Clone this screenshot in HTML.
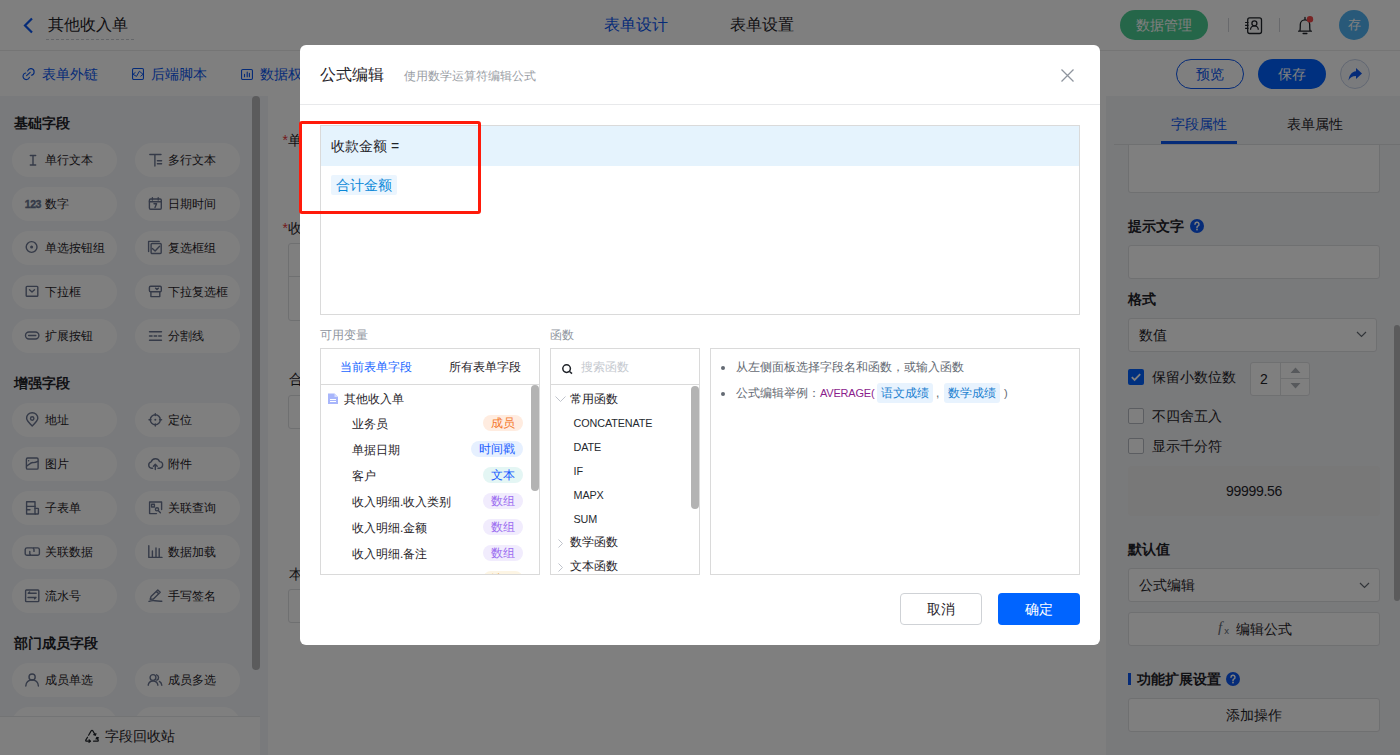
<!DOCTYPE html>
<html><head><meta charset="utf-8">
<style>
*{box-sizing:border-box;margin:0;padding:0}
html,body{width:1400px;height:755px;overflow:hidden;background:#fff;font-family:"Liberation Sans",sans-serif;color:#1f2329}
.a{position:absolute;white-space:nowrap}
svg{position:absolute;overflow:visible}
.sec{font-size:14px;font-weight:bold;color:#1f2329;left:14px;line-height:20px}
.pill{position:absolute;width:105px;height:34px;border-radius:17px;background:#fff}
.pt{position:absolute;font-size:12px;line-height:18px;color:#1f2329;white-space:nowrap}
.ic{position:absolute;width:14px;height:14px}
.ic svg{left:0;top:0}
.lbl{font-size:14px;line-height:20px;color:#1f2329}
.box{position:absolute;border:1px solid #dee0e3;border-radius:3px;background:#fff}
</style></head><body>

<!-- ================= HEADER ================= -->
<div class="a" style="left:0;top:0;width:1400px;height:51px;background:#fff;border-bottom:1px solid #ebebeb"></div>
<svg style="left:22px;top:17px" width="13" height="17" viewBox="0 0 13 17"><path d="M10 1.5 L3 8.5 L10 15.5" fill="none" stroke="#0a56f0" stroke-width="2.2"/></svg>
<div class="a" style="left:48px;top:14px;font-size:16px;line-height:22px;color:#1f2329">其他收入单</div>
<div class="a" style="left:46px;top:39px;width:88px;border-top:1px dashed #c9ccd2"></div>
<div class="a" style="left:604px;top:14px;font-size:16px;line-height:22px;color:#0a56f0">表单设计</div>
<div class="a" style="left:730px;top:14px;font-size:16px;line-height:22px;color:#1f2329">表单设置</div>
<div class="a" style="left:1120px;top:10px;width:88px;height:30px;border-radius:15px;background:#4bcc92;color:#fff;font-size:14px;line-height:30px;text-align:center">数据管理</div>
<div class="a" style="left:1228px;top:18px;width:1px;height:14px;background:#d0d3d8"></div>
<svg style="left:1238px;top:10px" width="82" height="32" viewBox="0 0 82 32"><rect x="9.7" y="7.9" width="13.8" height="15.6" rx="2" fill="none" stroke="#1f2329" stroke-width="1.3"/><path d="M7.1 12.5h3.4M7.1 15.4h3.4M7.1 18.3h3.4" stroke="#1f2329" stroke-width="1.2"/><circle cx="16.4" cy="13.3" r="2.5" fill="none" stroke="#1f2329" stroke-width="1.3"/><path d="M12.5 19.7A3.9 3.9 0 0 1 20.3 19.7" fill="none" stroke="#1f2329" stroke-width="1.3"/></svg>
<div class="a" style="left:1279px;top:18px;width:1px;height:14px;background:#d0d3d8"></div>
<svg style="left:1238px;top:10px" width="82" height="32" viewBox="0 0 82 32"><path d="M60.6 21.2H73.4M61.8 21.2C62.3 20 62.3 19 62.3 14.6A4.7 4.7 0 0 1 71.7 14.6C71.7 19 71.7 20 72.2 21.2M67 7.4V9.4M65.1 23.5H68.9" fill="none" stroke="#1f2329" stroke-width="1.3" stroke-linecap="round"/><circle cx="72" cy="9.2" r="3.2" fill="#f04848"/></svg>
<div class="a" style="left:1339px;top:10px;width:30px;height:30px;border-radius:15px;background:#50b3f2;color:#fff;font-size:13px;line-height:30px;text-align:center">存</div>

<!-- ================= TOOLBAR ================= -->
<div class="a" style="left:0;top:51px;width:1400px;height:45px;background:#fff"></div>
<svg style="left:22px;top:67px" width="13" height="13" viewBox="0 0 13 13"><path d="M5.7 3.9A3.3 3.3 0 1 1 9.4 8.2M7.4 10.4A3.3 3.3 0 1 1 3.7 6.0M4.6 8.6L8.2 5.3" fill="none" stroke="#0a56f0" stroke-width="1.15" stroke-linecap="round"/></svg>
<div class="a" style="left:42px;top:64px;font-size:14px;line-height:20px;color:#0a56f0">表单外链</div>
<svg style="left:132px;top:68px" width="12" height="12" viewBox="0 0 12 12"><rect x="0.55" y="0.55" width="10.9" height="10.9" rx="1.2" fill="none" stroke="#0a56f0" stroke-width="1.1"/><path d="M3.5 4.3L1 6.3 4.5 8.4 7.4 3.2 11 6.3 8.5 8.4" fill="none" stroke="#0a56f0" stroke-width="1" stroke-linejoin="round"/></svg>
<div class="a" style="left:151px;top:64px;font-size:14px;line-height:20px;color:#0a56f0">后端脚本</div>
<svg style="left:241px;top:69px" width="12" height="11" viewBox="0 0 12 11"><rect x="0.55" y="0.55" width="10.9" height="9.9" rx="1.2" fill="none" stroke="#0a56f0" stroke-width="1.1"/><path d="M3.5 5.2V7.8M6.2 3V7.8M8.4 4.4V7.8" fill="none" stroke="#0a56f0" stroke-width="1.1" stroke-linecap="round"/></svg>
<div class="a" style="left:260px;top:64px;font-size:14px;line-height:20px;color:#0a56f0">数据权限</div>
<div class="a" style="left:1176px;top:59px;width:68px;height:30px;border-radius:15px;border:1px solid #0a56f0;color:#0a56f0;font-size:14px;line-height:28px;text-align:center">预览</div>
<div class="a" style="left:1258px;top:59px;width:68px;height:30px;border-radius:15px;background:#0060ff;color:#fff;font-size:14px;line-height:30px;text-align:center">保存</div>
<div class="a" style="left:1340px;top:59px;width:30px;height:30px;border-radius:15px;border:1px solid #c5d0e6;background:#f4f6fb"></div>
<svg style="left:1347px;top:66px" width="16" height="16" viewBox="0 0 16 16"><path d="M9 2 L15 7.5 L9 13 V10 C5 10 3 11.5 1.5 14.5 C2 9.5 4.5 5.5 9 5.2 Z" fill="#0a56f0"/></svg>

<!-- ================= LEFT PANEL ================= -->
<div class="a" style="left:0;top:96px;width:268px;height:659px;background:#f3f5f8"></div>
<div class="a" style="left:252px;top:96px;width:8px;height:574px;border-radius:4px;background:#b6b7b9"></div>
<div class="a sec" style="top:113px">基础字段</div>
<div class="pill" style="left:12px;top:143px"></div>
<svg style="left:24px;top:153px" width="16" height="14" viewBox="0 0 16 14"><path d="M6.3 2.5h5.4M9 2.5v9.5M6.3 12h5.4" stroke="#6a7590" stroke-width="1.4" fill="none" stroke-linecap="round" stroke-linejoin="round"/></svg>
<div class="pt" style="left:45px;top:151px">单行文本</div>
<div class="pill" style="left:135px;top:143px"></div>
<svg style="left:147px;top:153px" width="16" height="14" viewBox="0 0 16 14"><path d="M2.8 1.5H14M7.9 1.5V13M10.4 7.8H14.6M10.4 10.8H14.6" stroke="#6a7590" stroke-width="1.4" fill="none" stroke-linecap="round" stroke-linejoin="round"/></svg>
<div class="pt" style="left:168px;top:151px">多行文本</div>
<div class="pill" style="left:12px;top:187px"></div>
<svg style="left:24px;top:197px" width="16" height="14" viewBox="0 0 16 14"><text x="0.8" y="11.2" font-size="10.5" font-weight="bold" fill="#6a7590" letter-spacing="-0.5" stroke="#6a7590" stroke-width="0.4" font-family="Liberation Sans">123</text></svg>
<div class="pt" style="left:45px;top:195px">数字</div>
<div class="pill" style="left:135px;top:187px"></div>
<svg style="left:147px;top:197px" width="16" height="14" viewBox="0 0 16 14"><rect x="2.4" y="2" width="11.9" height="10.2" rx="1.2" stroke="#6a7590" stroke-width="1.4" fill="none" stroke-linecap="round" stroke-linejoin="round"/><path d="M2.4 4.8h11.9M5.4 0.8v2.2M11.2 0.8v2.2M7 6.8h2.6L8 10.6" stroke="#6a7590" stroke-width="1.4" fill="none" stroke-linecap="round" stroke-linejoin="round"/></svg>
<div class="pt" style="left:168px;top:195px">日期时间</div>
<div class="pill" style="left:12px;top:231px"></div>
<svg style="left:24px;top:241px" width="16" height="14" viewBox="0 0 16 14"><circle cx="7.6" cy="6" r="5.4" stroke="#6a7590" stroke-width="1.4" fill="none" stroke-linecap="round" stroke-linejoin="round"/><circle cx="7.6" cy="6" r="1.5" fill="#6a7590"/></svg>
<div class="pt" style="left:45px;top:239px">单选按钮组</div>
<div class="pill" style="left:135px;top:231px"></div>
<svg style="left:147px;top:241px" width="16" height="14" viewBox="0 0 16 14"><path d="M1.6 10.5V0.4H12.2" stroke="#6a7590" stroke-width="1.4" fill="none" stroke-linecap="round" stroke-linejoin="round"/><rect x="4.1" y="2.5" width="10.1" height="10" rx="1" stroke="#6a7590" stroke-width="1.4" fill="none" stroke-linecap="round" stroke-linejoin="round"/><path d="M5.4 7.6L8.1 10.1 12.6 5.3" stroke="#6a7590" stroke-width="1.4" fill="none" stroke-linecap="round" stroke-linejoin="round"/></svg>
<div class="pt" style="left:168px;top:239px">复选框组</div>
<div class="pill" style="left:12px;top:275px"></div>
<svg style="left:24px;top:285px" width="16" height="14" viewBox="0 0 16 14"><rect x="2.2" y="1.4" width="11.6" height="9.8" rx="0.8" stroke="#6a7590" stroke-width="1.4" fill="none" stroke-linecap="round" stroke-linejoin="round"/><path d="M5.5 4.8L8 7 10.5 4.8" stroke="#6a7590" stroke-width="1.4" fill="none" stroke-linecap="round" stroke-linejoin="round"/></svg>
<div class="pt" style="left:45px;top:283px">下拉框</div>
<div class="pill" style="left:135px;top:275px"></div>
<svg style="left:147px;top:285px" width="16" height="14" viewBox="0 0 16 14"><rect x="2.4" y="1.3" width="11.9" height="5.4" rx="1.2" stroke="#6a7590" stroke-width="1.4" fill="none" stroke-linecap="round" stroke-linejoin="round"/><path d="M3.9 6.7V11.6H12.8V6.7M8.6 3.2L10 4.4 11.4 3.2" stroke="#6a7590" stroke-width="1.4" fill="none" stroke-linecap="round" stroke-linejoin="round"/></svg>
<div class="pt" style="left:168px;top:283px">下拉复选框</div>
<div class="pill" style="left:12px;top:319px"></div>
<svg style="left:24px;top:329px" width="16" height="14" viewBox="0 0 16 14"><rect x="1.5" y="3" width="13.4" height="7" rx="3.5" stroke="#6a7590" stroke-width="1.4" fill="none" stroke-linecap="round" stroke-linejoin="round"/><path d="M4.6 6.5h7.2" stroke="#6a7590" stroke-width="1.4" fill="none" stroke-linecap="round" stroke-linejoin="round"/></svg>
<div class="pt" style="left:45px;top:327px">扩展按钮</div>
<div class="pill" style="left:135px;top:319px"></div>
<svg style="left:147px;top:329px" width="16" height="14" viewBox="0 0 16 14"><path d="M2.5 2.7h12M2.5 11.3h12" stroke="#6a7590" stroke-width="1.4" fill="none" stroke-linecap="round" stroke-linejoin="round"/><path d="M2.5 7h12" stroke="#6a7590" stroke-width="1.4" fill="none" stroke-linecap="round" stroke-linejoin="round" stroke-dasharray="2.6 2"/></svg>
<div class="pt" style="left:168px;top:327px">分割线</div>
<div class="a sec" style="top:373px">增强字段</div>
<div class="pill" style="left:12px;top:403px"></div>
<svg style="left:24px;top:413px" width="16" height="14" viewBox="0 0 16 14"><path d="M8.2 13C5 10 2.6 7.6 2.6 5.3a5.6 5.6 0 0 1 11.2 0c0 2.3-2.4 4.7-5.6 7.7z" stroke="#6a7590" stroke-width="1.4" fill="none" stroke-linecap="round" stroke-linejoin="round"/><circle cx="8.2" cy="5.5" r="1.7" stroke="#6a7590" stroke-width="1.4" fill="none" stroke-linecap="round" stroke-linejoin="round"/></svg>
<div class="pt" style="left:45px;top:411px">地址</div>
<div class="pill" style="left:135px;top:403px"></div>
<svg style="left:147px;top:413px" width="16" height="14" viewBox="0 0 16 14"><circle cx="8.3" cy="6.8" r="5" stroke="#6a7590" stroke-width="1.4" fill="none" stroke-linecap="round" stroke-linejoin="round"/><circle cx="8.3" cy="6.8" r="1" fill="#6a7590"/><path d="M8.3 0.6v2M8.3 11v2M2 6.8h2M12.6 6.8h2" stroke="#6a7590" stroke-width="1.4" fill="none" stroke-linecap="round" stroke-linejoin="round"/></svg>
<div class="pt" style="left:168px;top:411px">定位</div>
<div class="pill" style="left:12px;top:447px"></div>
<svg style="left:24px;top:457px" width="16" height="14" viewBox="0 0 16 14"><rect x="2.4" y="1" width="11.7" height="11.1" rx="1.2" stroke="#6a7590" stroke-width="1.4" fill="none" stroke-linecap="round" stroke-linejoin="round"/><path d="M2.8 9L5 7.4Q7.4 5.2 9.6 5.6 11.6 5.6 13.8 4.4M4.6 3.8h.1" stroke="#6a7590" stroke-width="1.4" fill="none" stroke-linecap="round" stroke-linejoin="round"/></svg>
<div class="pt" style="left:45px;top:455px">图片</div>
<div class="pill" style="left:135px;top:447px"></div>
<svg style="left:147px;top:457px" width="16" height="14" viewBox="0 0 16 14"><path d="M5.6 11.2H4.6A3.2 3.2 0 0 1 4.2 4.9 4.4 4.4 0 0 1 12.5 4.6 3.3 3.3 0 0 1 12.2 11.2H11" stroke="#6a7590" stroke-width="1.4" fill="none" stroke-linecap="round" stroke-linejoin="round"/><path d="M8.3 12.6V7.4M6.4 9.2L8.3 7.3 10.2 9.2" stroke="#6a7590" stroke-width="1.4" fill="none" stroke-linecap="round" stroke-linejoin="round"/></svg>
<div class="pt" style="left:168px;top:455px">附件</div>
<div class="pill" style="left:12px;top:491px"></div>
<svg style="left:24px;top:501px" width="16" height="14" viewBox="0 0 16 14"><path d="M11 7.4V0.8H2.6V13H11.4" stroke="#6a7590" stroke-width="1.4" fill="none" stroke-linecap="round" stroke-linejoin="round"/><rect x="11" y="7.4" width="3.4" height="5.6" rx="0.6" stroke="#6a7590" stroke-width="1.4" fill="none" stroke-linecap="round" stroke-linejoin="round"/><path d="M2.6 5.4H11M2.6 8.8H6" stroke="#6a7590" stroke-width="1.4" fill="none" stroke-linecap="round" stroke-linejoin="round"/></svg>
<div class="pt" style="left:45px;top:499px">子表单</div>
<div class="pill" style="left:135px;top:491px"></div>
<svg style="left:147px;top:501px" width="16" height="14" viewBox="0 0 16 14"><path d="M14.6 8.6V1H2.6V12.6H9.5" stroke="#6a7590" stroke-width="1.4" fill="none" stroke-linecap="round" stroke-linejoin="round"/><rect x="4.6" y="3.2" width="2.8" height="2.8" stroke="#6a7590" stroke-width="1.4" fill="none" stroke-linecap="round" stroke-linejoin="round"/><circle cx="10" cy="8.3" r="1.6" stroke="#6a7590" stroke-width="1.4" fill="none" stroke-linecap="round" stroke-linejoin="round"/><path d="M11.2 9.6L13.4 11.8" stroke="#6a7590" stroke-width="1.4" fill="none" stroke-linecap="round" stroke-linejoin="round"/></svg>
<div class="pt" style="left:168px;top:499px">关联查询</div>
<div class="pill" style="left:12px;top:535px"></div>
<svg style="left:24px;top:545px" width="16" height="14" viewBox="0 0 16 14"><path d="M6.5 10.2H3A1.8 1.8 0 0 1 1.2 8.4V4.6A1.8 1.8 0 0 1 3 2.9H8.2A1.8 1.8 0 0 1 10 4.6V6.4" stroke="#6a7590" stroke-width="1.4" fill="none" stroke-linecap="round" stroke-linejoin="round"/><path d="M9.4 2.9H13.6A1.8 1.8 0 0 1 15.4 4.6V8.4A1.8 1.8 0 0 1 13.6 10.2H7.6A1.8 1.8 0 0 1 5.8 8.4V6.5" stroke="#6a7590" stroke-width="1.4" fill="none" stroke-linecap="round" stroke-linejoin="round"/></svg>
<div class="pt" style="left:45px;top:543px">关联数据</div>
<div class="pill" style="left:135px;top:535px"></div>
<svg style="left:147px;top:545px" width="16" height="14" viewBox="0 0 16 14"><path d="M1.8 0.8V12.4H15M5.4 6V12M9 2.9V12M12.2 3.8V12" stroke="#6a7590" stroke-width="1.4" fill="none" stroke-linecap="round" stroke-linejoin="round"/></svg>
<div class="pt" style="left:168px;top:543px">数据加载</div>
<div class="pill" style="left:12px;top:579px"></div>
<svg style="left:24px;top:589px" width="16" height="14" viewBox="0 0 16 14"><rect x="1.6" y="1" width="13.2" height="11.6" rx="0.8" stroke="#6a7590" stroke-width="1.4" fill="none" stroke-linecap="round" stroke-linejoin="round"/><path d="M12.2 4.3H4.2M5.6 3L4.2 4.3M4 8.5H12M10.6 9.8L12 8.5" stroke="#6a7590" stroke-width="1.4" fill="none" stroke-linecap="round" stroke-linejoin="round"/></svg>
<div class="pt" style="left:45px;top:587px">流水号</div>
<div class="pill" style="left:135px;top:579px"></div>
<svg style="left:147px;top:589px" width="16" height="14" viewBox="0 0 16 14"><path d="M3.2 10.2L4 7.6 10.8 0.9 13.2 3.2 6.4 10 3.2 10.2zM9.4 2.4L11.8 4.7" stroke="#6a7590" stroke-width="1.4" fill="none" stroke-linecap="round" stroke-linejoin="round"/><path d="M2 12.4Q5 11.3 8 11.8T14.8 12.2" stroke="#6a7590" stroke-width="1.4" fill="none" stroke-linecap="round" stroke-linejoin="round"/></svg>
<div class="pt" style="left:168px;top:587px">手写签名</div>
<div class="a sec" style="top:633px">部门成员字段</div>
<div class="pill" style="left:12px;top:663px"></div>
<svg style="left:24px;top:673px" width="16" height="14" viewBox="0 0 16 14"><circle cx="8.1" cy="4.1" r="3.1" stroke="#6a7590" stroke-width="1.4" fill="none" stroke-linecap="round" stroke-linejoin="round"/><path d="M1.8 13A6.3 6.3 0 0 1 14.4 13" stroke="#6a7590" stroke-width="1.4" fill="none" stroke-linecap="round" stroke-linejoin="round"/></svg>
<div class="pt" style="left:45px;top:671px">成员单选</div>
<div class="pill" style="left:135px;top:663px"></div>
<svg style="left:147px;top:673px" width="16" height="14" viewBox="0 0 16 14"><circle cx="6" cy="4.5" r="2.9" stroke="#6a7590" stroke-width="1.4" fill="none" stroke-linecap="round" stroke-linejoin="round"/><path d="M1.2 12.2A4.9 4.9 0 0 1 10.9 12.2M9.6 1.8A2.9 2.9 0 0 1 9.8 7.2M12.4 8.4A5 5 0 0 1 14.8 12.2" stroke="#6a7590" stroke-width="1.4" fill="none" stroke-linecap="round" stroke-linejoin="round"/></svg>
<div class="pt" style="left:168px;top:671px">成员多选</div>
<div class="pill" style="left:12px;top:707px"></div>
<svg style="left:24px;top:717px" width="16" height="14" viewBox="0 0 16 14"><rect x="2" y="2" width="10" height="10" stroke="#6a7590" stroke-width="1.4" fill="none" stroke-linecap="round" stroke-linejoin="round"/></svg>
<div class="pt" style="left:45px;top:715px">部门单选</div>
<div class="pill" style="left:135px;top:707px"></div>
<svg style="left:147px;top:717px" width="16" height="14" viewBox="0 0 16 14"><rect x="2" y="2" width="10" height="10" stroke="#6a7590" stroke-width="1.4" fill="none" stroke-linecap="round" stroke-linejoin="round"/></svg>
<div class="pt" style="left:168px;top:715px">部门多选</div>
<div class="a" style="left:0;top:716px;width:260px;height:39px;background:#fff;border-top:1px solid #e6e8eb"></div>
<svg style="left:84px;top:728px" width="16" height="15" viewBox="0 0 16 15"><path d="M4.6 7.2L7 3.1Q8 1.4 9 3.1L11.4 7.2M9.8 6.6L11.4 7.3 11.9 5.6M3.5 9.2L1.9 11.9Q1.2 13.2 2.8 13.2H6.4M5 11.8L6.5 13.2 5 14.4M9.6 13.2H13.2Q14.8 13.2 14.1 11.9L12.8 9.6M12.1 11.1L12.8 9.4 14.5 9.8" fill="none" stroke="#1f2329" stroke-width="1.2" stroke-linecap="round" stroke-linejoin="round"/></svg>
<div class="a" style="left:105px;top:726px;font-size:14px;line-height:20px;color:#1f2329">字段回收站</div>

<!-- ================= CANVAS ================= -->
<div class="a" style="left:268px;top:96px;width:838px;height:659px;background:#fff"></div>
<div class="a" style="left:282.5px;top:129.5px;font-size:14px;line-height:20px"><span style="color:#e8343a">*</span>单据编号</div>
<div class="a" style="left:282.5px;top:218px;font-size:14px;line-height:20px"><span style="color:#e8343a">*</span>收款明细</div>
<div class="box" style="left:288px;top:243px;width:700px;height:78px"></div>
<div class="a" style="left:288px;top:276px;width:700px;height:1px;background:#dee0e3"></div>
<div class="a" style="left:289px;top:369px;font-size:14px;line-height:20px">合计金额</div>
<div class="box" style="left:288px;top:395px;width:700px;height:34px"></div>
<div class="a" style="left:289px;top:564px;font-size:14px;line-height:20px">本次收款</div>
<div class="box" style="left:288px;top:589px;width:700px;height:34px"></div>

<!-- ================= RIGHT PANEL ================= -->
<div class="a" style="left:1106px;top:96px;width:294px;height:659px;background:#f3f4f6"></div>
<div class="a" style="left:1171px;top:114px;font-size:14px;line-height:20px;color:#0a56f0">字段属性</div>
<div class="a" style="left:1287px;top:114px;font-size:14px;line-height:20px;color:#1f2329">表单属性</div>
<div class="a" style="left:1114px;top:144px;width:286px;height:1px;background:#dee0e3"></div>
<div class="a" style="left:1161px;top:141px;width:76px;height:3px;background:#0a56f0"></div>
<div class="box" style="left:1128px;top:145px;width:252px;height:48px;border-top:none;border-radius:0 0 3px 3px"></div>
<div class="a" style="left:1128px;top:216px;font-size:14px;line-height:20px;font-weight:bold">提示文字</div>
<svg style="left:1190px;top:219px" width="14" height="14" viewBox="0 0 14 14"><circle cx="7" cy="7" r="7" fill="#0a56f0"/><path d="M5 5.3a2 2 0 1 1 2.8 1.8c-.6.3-.8.6-.8 1.3v.4" fill="none" stroke="#fff" stroke-width="1.5" stroke-linecap="round"/><circle cx="7" cy="10.6" r=".9" fill="#fff"/></svg>
<div class="box" style="left:1128px;top:245px;width:252px;height:34px"></div>
<div class="a" style="left:1128px;top:289px;font-size:14px;line-height:20px;font-weight:bold">格式</div>
<div class="box" style="left:1128px;top:318px;width:249px;height:34px"></div>
<div class="a" style="left:1139px;top:325px;font-size:14px;line-height:20px">数值</div>
<svg style="left:1356px;top:331px" width="11" height="7" viewBox="0 0 11 7"><path d="M1 1l4.5 4.5L10 1" fill="none" stroke="#646a73" stroke-width="1.2"/></svg>
<div class="a" style="left:1128px;top:369px;width:16px;height:16px;border-radius:2px;background:#0060ff"></div>
<svg style="left:1128px;top:369px" width="16" height="16" viewBox="0 0 16 16"><path d="M3.8 8.2l2.8 2.8 5.6-5.8" fill="none" stroke="#fff" stroke-width="1.8"/></svg>
<div class="a" style="left:1152px;top:367px;font-size:14px;line-height:20px">保留小数位数</div>
<div class="box" style="left:1250px;top:362px;width:60px;height:34px"></div>
<div class="a" style="left:1280px;top:363px;width:1px;height:32px;background:#dee0e3"></div>
<div class="a" style="left:1281px;top:378px;width:28px;height:1px;background:#dee0e3"></div>
<div class="a" style="left:1260px;top:369px;font-size:14px;line-height:20px">2</div>
<svg style="left:1290px;top:367px" width="11" height="22" viewBox="0 0 11 22"><path d="M0.5 6L5.5 0.5 10.5 6z M0.5 16L5.5 21.5 10.5 16z" fill="#aeb2b8"/></svg>
<div class="a" style="left:1128px;top:408px;width:16px;height:16px;border-radius:2px;border:1px solid #b7bbc2;background:#fff"></div>
<div class="a" style="left:1152px;top:406px;font-size:14px;line-height:20px">不四舍五入</div>
<div class="a" style="left:1128px;top:438px;width:16px;height:16px;border-radius:2px;border:1px solid #b7bbc2;background:#fff"></div>
<div class="a" style="left:1152px;top:436px;font-size:14px;line-height:20px">显示千分符</div>
<div class="a" style="left:1128px;top:466px;width:252px;height:50px;background:#f0f0f0;border-radius:4px"></div>
<div class="a" style="left:1128px;top:481px;width:252px;text-align:center;font-size:14px;line-height:20px;letter-spacing:-0.3px;color:#1f2329">99999.56</div>
<div class="a" style="left:1128px;top:539px;font-size:14px;line-height:20px;font-weight:bold">默认值</div>
<div class="box" style="left:1128px;top:568px;width:252px;height:34px"></div>
<div class="a" style="left:1139px;top:575px;font-size:14px;line-height:20px">公式编辑</div>
<svg style="left:1359px;top:582px" width="11" height="7" viewBox="0 0 11 7"><path d="M1 1l4.5 4.5L10 1" fill="none" stroke="#646a73" stroke-width="1.2"/></svg>
<div class="box" style="left:1128px;top:612px;width:252px;height:34px"></div>
<div class="a" style="left:1218px;top:617px;font-size:15px;line-height:20px;font-style:italic;font-family:'Liberation Serif',serif;color:#646a73">f<span style="font-size:9.5px;font-style:normal;font-family:'Liberation Sans';position:relative;top:2px;margin-left:2px">x</span></div>
<div class="a" style="left:1236px;top:618.5px;font-size:14px;line-height:20px">编辑公式</div>
<div class="a" style="left:1128px;top:673px;width:3px;height:12px;background:#0a56f0"></div>
<div class="a" style="left:1137px;top:669px;font-size:14px;line-height:20px;font-weight:bold">功能扩展设置</div>
<svg style="left:1226px;top:672px" width="14" height="14" viewBox="0 0 14 14"><circle cx="7" cy="7" r="7" fill="#0a56f0"/><path d="M5 5.3a2 2 0 1 1 2.8 1.8c-.6.3-.8.6-.8 1.3v.4" fill="none" stroke="#fff" stroke-width="1.5" stroke-linecap="round"/><circle cx="7" cy="10.6" r=".9" fill="#fff"/></svg>
<div class="box" style="left:1128px;top:698px;width:252px;height:34px"></div>
<div class="a" style="left:1128px;top:705px;width:252px;text-align:center;font-size:14px;line-height:20px">添加操作</div>
<div class="a" style="left:1394px;top:325px;width:6px;height:276px;border-radius:3px;background:#b6b7b9"></div>

<!-- ================= MASK ================= -->
<div class="a" style="left:0;top:0;width:1400px;height:755px;background:rgba(0,0,0,0.5)"></div>

<!-- ================= MODAL ================= -->
<div class="a" style="left:300px;top:45px;width:800px;height:600px;background:#fff;border-radius:6px"></div>
<div class="a" style="left:320px;top:64px;font-size:16px;line-height:22px;color:#1f2329">公式编辑</div>
<div class="a" style="left:404px;top:68px;font-size:12px;line-height:17px;color:#9a9ea5">使用数学运算符编辑公式</div>
<svg style="left:1061px;top:69px" width="13" height="13" viewBox="0 0 13 13"><path d="M0.5 0.5L12.5 12.5M12.5 0.5L0.5 12.5" stroke="#8f959e" stroke-width="1.3"/></svg>
<div class="a" style="left:300px;top:104px;width:800px;height:1px;background:#e8e9eb"></div>
<div class="a" style="left:320px;top:125px;width:760px;height:190px;border:1px solid #dadada;background:#fff"></div>
<div class="a" style="left:321px;top:126px;width:758px;height:40px;background:#e5f3fd"></div>
<div class="a" style="left:331px;top:136px;font-size:14px;line-height:20px;color:#1f2329">收款金额 =</div>
<div class="a" style="left:331px;top:175px;width:66px;height:20px;background:#ebf5fe;border-radius:2px"></div>
<div class="a" style="left:336px;top:175px;font-size:14px;line-height:20px;color:#0a88d8">合计金额</div>
<div class="a" style="left:299px;top:121px;width:182px;height:93px;border:3px solid #ff1a0a;border-radius:3px"></div>
<div class="a" style="left:320px;top:327px;font-size:12px;line-height:17px;color:#8f959e">可用变量</div>
<div class="a" style="left:550px;top:327px;font-size:12px;line-height:17px;color:#8f959e">函数</div>
<div class="a" style="left:320px;top:348px;width:220px;height:227px;border:1px solid #dadada;background:#fff;overflow:hidden"><div class="a" style="left:0;top:35px;width:218px;height:1px;background:#dadada"></div><div class="a" style="left:19px;top:10px;font-size:12px;line-height:17px;color:#1966ff">当前表单字段</div><div class="a" style="left:128px;top:10px;font-size:12px;line-height:17px;color:#1f2329">所有表单字段</div><svg style="left:7px;top:44px" width="10" height="11" viewBox="0 0 10 11"><path d="M0 0.5h6.5L10 4v7H0z" fill="#a8b6fb"/><path d="M6.5 0.5V4H10" fill="#d6ddfd"/><path d="M2 6.5h6M2 8.5h6" stroke="#fff" stroke-width="1"/></svg><div class="a" style="left:23px;top:42px;font-size:12px;line-height:17px;color:#1f2329">其他收入单</div><div class="a" style="left:31px;top:67px;font-size:12px;line-height:17px;color:#1f2329">业务员</div><div class="a" style="left:162px;top:66px;width:40px;height:16px;border-radius:8px;background:#ffece0;color:#f4782c;font-size:12px;line-height:16px;text-align:center">成员</div><div class="a" style="left:31px;top:93px;font-size:12px;line-height:17px;color:#1f2329">单据日期</div><div class="a" style="left:150px;top:92px;width:52px;height:16px;border-radius:8px;background:#e6f0ff;color:#1a5cff;font-size:12px;line-height:16px;text-align:center">时间戳</div><div class="a" style="left:31px;top:119px;font-size:12px;line-height:17px;color:#1f2329">客户</div><div class="a" style="left:162px;top:118px;width:40px;height:16px;border-radius:8px;background:#e4f6f4;color:#1a5cff;font-size:12px;line-height:16px;text-align:center">文本</div><div class="a" style="left:31px;top:145px;font-size:12px;line-height:17px;color:#1f2329">收入明细.收入类别</div><div class="a" style="left:162px;top:144px;width:40px;height:16px;border-radius:8px;background:#f1ecfd;color:#9b6cf0;font-size:12px;line-height:16px;text-align:center">数组</div><div class="a" style="left:31px;top:171px;font-size:12px;line-height:17px;color:#1f2329">收入明细.金额</div><div class="a" style="left:162px;top:170px;width:40px;height:16px;border-radius:8px;background:#f1ecfd;color:#9b6cf0;font-size:12px;line-height:16px;text-align:center">数组</div><div class="a" style="left:31px;top:197px;font-size:12px;line-height:17px;color:#1f2329">收入明细.备注</div><div class="a" style="left:162px;top:196px;width:40px;height:16px;border-radius:8px;background:#f1ecfd;color:#9b6cf0;font-size:12px;line-height:16px;text-align:center">数组</div><div class="a" style="left:31px;top:223px;font-size:12px;line-height:17px;color:#1f2329">单据状态</div><div class="a" style="left:162px;top:222px;width:40px;height:16px;border-radius:8px;background:#fdf5e4;color:#e6a23c;font-size:12px;line-height:16px;text-align:center">选项</div><div class="a" style="left:210px;top:36px;width:8px;height:106px;border-radius:4px;background:#b3b3b3"></div></div>
<div class="a" style="left:550px;top:348px;width:150px;height:227px;border:1px solid #dadada;background:#fff;overflow:hidden"><div class="a" style="left:0;top:35px;width:148px;height:1px;background:#dadada"></div><svg style="left:11px;top:14.5px" width="11" height="10" viewBox="0 0 11 10"><circle cx="4.6" cy="4.6" r="3.8" fill="none" stroke="#1f2329" stroke-width="1.5"/><path d="M7.5 7.5L10 9.6" stroke="#1f2329" stroke-width="1.5"/></svg><div class="a" style="left:30px;top:10px;font-size:12px;line-height:17px;color:#c5c9cf">搜索函数</div><div class="a" style="left:18.5px;top:42px;font-size:12px;line-height:17px;color:#1f2329">常用函数</div><svg style="left:4px;top:47px" width="11" height="7" viewBox="0 0 11 7"><path d="M0.5 0.5l5 5 5-5" fill="none" stroke="#c0c4cc" stroke-width="1"/></svg><div class="a" style="left:22.5px;top:65.5px;font-size:10.8px;line-height:16px;color:#262a30;letter-spacing:-0.1px">CONCATENATE</div><div class="a" style="left:22.5px;top:89.5px;font-size:10.8px;line-height:16px;color:#262a30;letter-spacing:-0.1px">DATE</div><div class="a" style="left:22.5px;top:113.5px;font-size:10.8px;line-height:16px;color:#262a30;letter-spacing:-0.1px">IF</div><div class="a" style="left:22.5px;top:137.5px;font-size:10.8px;line-height:16px;color:#262a30;letter-spacing:-0.1px">MAPX</div><div class="a" style="left:22.5px;top:161.5px;font-size:10.8px;line-height:16px;color:#262a30;letter-spacing:-0.1px">SUM</div><div class="a" style="left:18.5px;top:185px;font-size:12px;line-height:17px;color:#1f2329">数学函数</div><svg style="left:7px;top:190px" width="5" height="9" viewBox="0 0 5 9"><path d="M0.5 0.5l4 4-4 4" fill="none" stroke="#c0c4cc" stroke-width="1"/></svg><div class="a" style="left:18.5px;top:209px;font-size:12px;line-height:17px;color:#1f2329">文本函数</div><svg style="left:7px;top:214px" width="5" height="9" viewBox="0 0 5 9"><path d="M0.5 0.5l4 4-4 4" fill="none" stroke="#c0c4cc" stroke-width="1"/></svg><div class="a" style="left:140px;top:37px;width:8px;height:123px;border-radius:4px;background:#b3b3b3"></div></div>
<div class="a" style="left:710px;top:348px;width:370px;height:227px;border:1px solid #dadada;background:#fff"></div>
<div class="a" style="left:721px;top:366px;width:4px;height:4px;border-radius:2px;background:#646a73"></div>
<div class="a" style="left:721px;top:392px;width:4px;height:4px;border-radius:2px;background:#646a73"></div>
<div class="a" style="left:736px;top:359px;font-size:12px;line-height:17px;color:#646a73">从左侧面板选择字段名和函数，或输入函数</div>
<div class="a" style="left:736px;top:385px;font-size:12px;line-height:17px;color:#646a73">公式编辑举例：</div>
<div class="a" style="left:820px;top:385px;font-size:11px;line-height:17px;color:#8a1c8c;letter-spacing:-0.2px">AVERAGE(</div>
<div class="a" style="left:877px;top:383px;width:56px;height:20px;border-radius:3px;background:#e8f3fe;color:#1a80d0;font-size:12px;line-height:20px;text-align:center">语文成绩</div>
<div class="a" style="left:936px;top:385px;font-size:12px;line-height:17px;color:#646a73">,</div>
<div class="a" style="left:944px;top:383px;width:56px;height:20px;border-radius:3px;background:#e8f3fe;color:#1a80d0;font-size:12px;line-height:20px;text-align:center">数学成绩</div>
<div class="a" style="left:1004px;top:385px;font-size:11px;line-height:17px;color:#646a73">)</div>
<div class="a" style="left:900px;top:593px;width:82px;height:32px;border:1px solid #cfd2d6;border-radius:4px;background:#fff;font-size:14px;line-height:30px;text-align:center;color:#1f2329">取消</div>
<div class="a" style="left:998px;top:593px;width:82px;height:32px;border-radius:4px;background:#0064ff;font-size:14px;line-height:32px;text-align:center;color:#fff">确定</div>

</body></html>
